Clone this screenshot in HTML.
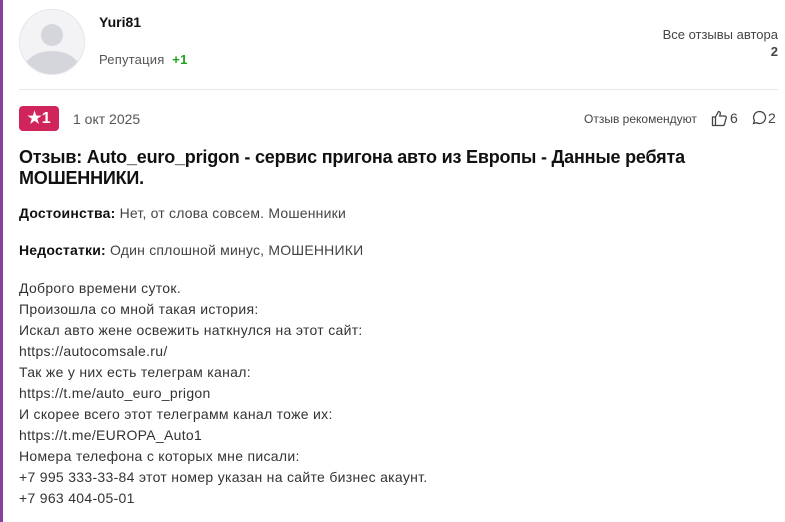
<!DOCTYPE html>
<html><head><meta charset="utf-8"><style>
body{margin:0;width:785px;height:522px;background:#fff;font-family:"Liberation Sans",sans-serif;position:relative;overflow:hidden;color:#222}
.strip{position:absolute;left:0;top:0;width:3px;height:522px;background:#8a3fa0}
.a{position:absolute}
.av{left:19px;top:9px;width:64px;height:64px;border-radius:50%;background:#f3f3f5;border:1px solid #e6e6ea;overflow:hidden}
.av .h{position:absolute;left:21px;top:14px;width:22px;height:22px;border-radius:50%;background:#d4d6dc}
.av .b{position:absolute;left:2px;top:41px;width:60px;height:44px;border-radius:50%;background:#d4d6dc}
.body{left:19px;top:278px;font-size:14px;line-height:21px;color:#333;letter-spacing:0.3px}
</style></head><body>
<div class="strip"></div>
<div class="a av"><div class="h"></div><div class="b"></div></div>
<div class="a" style="left:99px;top:14px;font-size:14px;font-weight:bold;color:#111">Yuri81</div>
<div class="a" style="left:99px;top:52px;font-size:13px;color:#555;letter-spacing:0.2px">Репутация <span style="color:#1aa31a;font-weight:bold;margin-left:4px">+1</span></div>
<div class="a" style="right:7px;top:26px;font-size:13px;color:#444;text-align:right;line-height:17px">Все отзывы автора<br><b>2</b></div>
<div class="a" style="left:19px;top:89px;width:759px;height:1px;background:#e8e8ea"></div>
<div class="a" style="left:19px;top:106px;width:40px;height:25px;border-radius:4px;background:#d0255a;color:#fff;font-weight:bold;font-size:16px;line-height:25px;text-align:center">★1</div>
<div class="a" style="left:73px;top:111px;font-size:14px;color:#555">1 окт 2025</div>
<div class="a" style="left:584px;top:112px;font-size:12px;color:#444">Отзыв рекомендуют</div>
<svg class="a" style="left:711px;top:110px" width="17" height="17" viewBox="0 0 17 17" fill="none" stroke="#444" stroke-width="1.3"><path d="M1.5 7h3v8.5h-3zM4.5 7l3-5.5c1.2 0 2 .8 1.8 2L8.8 6h5c1 0 1.7.9 1.4 1.8l-1.8 6.5c-.2.7-.8 1.2-1.5 1.2H4.5"/></svg>
<div class="a" style="left:730px;top:110px;font-size:14px;color:#444">6</div>
<svg class="a" style="left:752px;top:110px" width="15" height="15" viewBox="0 0 15 15" fill="none" stroke="#444" stroke-width="1.3"><path d="M7.5 1.5a6 6 0 1 1-3 11.2L1.5 13.5l.9-3A6 6 0 0 1 7.5 1.5z"/></svg>
<div class="a" style="left:768px;top:110px;font-size:14px;color:#444">2</div>
<div class="a" style="left:19px;top:147px;width:740px;font-size:18px;font-weight:bold;line-height:21px;color:#111;letter-spacing:-0.2px">Отзыв: Auto_euro_prigon - сервис пригона авто из Европы - Данные ребята МОШЕННИКИ.</div>
<div class="a" style="left:19px;top:205px;font-size:14px;color:#444;letter-spacing:0.2px"><b style="color:#111">Достоинства:</b> Нет, от слова совсем. Мошенники</div>
<div class="a" style="left:19px;top:242px;font-size:14px;color:#444;letter-spacing:0.2px"><b style="color:#111">Недостатки:</b> Один сплошной минус, МОШЕННИКИ</div>
<div class="a body">Доброго времени суток.<br>Произошла со мной такая история:<br>Искал авто жене освежить наткнулся на этот сайт:<br>https://autocomsale.ru/<br>Так же у них есть телеграм канал:<br>https://t.me/auto_euro_prigon<br>И скорее всего этот телеграмм канал тоже их:<br>https://t.me/EUROPA_Auto1<br>Номера телефона с которых мне писали:<br>+7 995 333-33-84 этот номер указан на сайте бизнес акаунт.<br>+7 963 404-05-01</div>
</body></html>
